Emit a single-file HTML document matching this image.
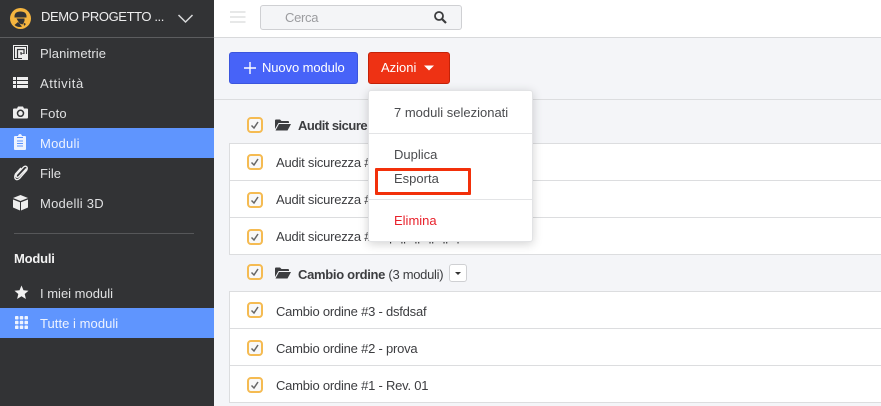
<!DOCTYPE html>
<html><head><meta charset="utf-8"><style>
*{box-sizing:border-box}
html,body{margin:0;padding:0}
body{width:881px;height:406px;position:relative;overflow:hidden;background:#f4f5f8;font-family:"Liberation Sans",sans-serif;font-size:13px;color:#3c3d40}
.a{position:absolute}
.t{position:absolute;white-space:nowrap;line-height:16px}
.nav{color:#e0e1e2}
.row{position:absolute;left:229px;width:660px;height:38px;background:#fff;border:1px solid #dcdddf}
.cb{position:absolute;left:247px;width:16px;height:16px;border:2px solid #f5bb52;border-radius:4px;background:#f8f8f8}
.cb svg{position:absolute;left:1px;top:1px}
</style></head><body>
<div class="a" style="left:214px;top:0;width:667px;height:38px;background:#fff;border-bottom:1px solid #d8d9db"></div>
<div class="a" style="left:214px;top:99px;width:667px;height:1px;background:#dcdddf"></div>
<div class="a" style="left:0;top:0;width:214px;height:406px;background:#323335"></div>
<div class="a" style="left:0;top:37px;width:214px;height:1px;background:#5c5d5f"></div>
<div class="a" style="left:0;top:128px;width:214px;height:30px;background:#5f95fe"></div>
<div class="a" style="left:0;top:308px;width:214px;height:30px;background:#5f95fe"></div>
<div class="a" style="left:14px;top:233px;width:180px;height:1px;background:#565759"></div>

<svg class="a" style="left:10px;top:8px" width="21" height="21" viewBox="0 0 21 21"><circle cx="10.500" cy="10.500" r="10.500" fill="#f5b53f"/><path d="M4.500 8.500Q4.500 3.500 10.500 3.500T16.500 8.500V9.500H4.500z" fill="#323335"/><path d="M6.500 10.500H14.500V13L12.500 16.500L9.500 15.500Z" fill="#323335"/><path d="M4.500 17L8 14 12 18.500Q8 20 4.500 17z" fill="#323335"/><path d="M13.500 14.500L14 18 16 16z" fill="#323335"/></svg>
<div class="t" style="left:41px;top:9px;color:#eeeeef;font-size:13px;letter-spacing:-.4px">DEMO PROGETTO ...</div>
<svg class="a" style="left:177px;top:13px" width="17" height="11" viewBox="0 0 17 11"><path d="M1.500 2l7 7 7-7" fill="none" stroke="#d8d9da" stroke-width="1.500"/></svg>

<svg class="a" style="left:13px;top:45px" width="15" height="15" viewBox="0 0 15 15"><rect width="15" height="15" fill="#eee"/><rect x="1" y="1" width="13" height="13" fill="#323335"/><rect x="2" y="2" width="11" height="11" fill="#eee"/><path d="M4.500 13V4.500H11V9H8V7" fill="none" stroke="#323335" stroke-width="1.200"/><rect x="9" y="9" width="5" height="5" fill="#eee"/></svg>
<div class="t nav" style="left:40px;top:46px;letter-spacing:.1px">Planimetrie</div>
<svg class="a" style="left:13px;top:76px" width="15" height="13" viewBox="0 0 15 13" fill="#eee"><rect y="1" width="3" height="3"/><rect x="4" y="1" width="11" height="3"/><rect y="5" width="3" height="3"/><rect x="4" y="5" width="11" height="3"/><rect y="9" width="3" height="3"/><rect x="4" y="9" width="11" height="3"/></svg>
<div class="t nav" style="left:40px;top:76px;letter-spacing:.6px">Attività</div>
<svg class="a" style="left:13px;top:106px" width="15" height="13" viewBox="0 0 15 13"><path d="M0 3.500Q0 2.500 1 2.500H4L5 .5H10L11 2.500H14Q15 2.500 15 3.500V11.500Q15 12.500 14 12.500H1Q0 12.500 0 11.500Z" fill="#eee"/><circle cx="7.500" cy="7.300" r="3" fill="none" stroke="#323335" stroke-width="1.500"/></svg>
<div class="t nav" style="left:40px;top:106px;letter-spacing:.2px">Foto</div>
<svg class="a" style="left:14px;top:134px" width="12" height="16" viewBox="0 0 12 16"><path d="M1 2H4Q4.500 0 6 0T8 2H11Q12 2 12 3V15Q12 16 11 16H1Q0 16 0 15V3Q0 2 1 2Z" fill="#eef3ff"/><path d="M3 3.500H9M3 7H9M3 9.500H9M3 12H9" stroke="#5f95fe" stroke-width="1"/></svg>
<div class="t nav" style="left:40px;top:136px;color:#eef3ff;letter-spacing:.25px">Moduli</div>
<svg class="a" style="left:14px;top:165px" width="14" height="16" viewBox="0 0 14 16"><path d="M12.500 3.500L5 11.500Q3.500 13 2.500 12T3 9L9.500 2Q11.500 .5 12.700 1.700T12.500 5.500L5.500 13.500Q3 15.500 1.500 14T1.500 9L7 3" fill="none" stroke="#eee" stroke-width="1.400"/></svg>
<div class="t nav" style="left:40px;top:166px">File</div>
<svg class="a" style="left:13px;top:195px" width="15" height="16" viewBox="0 0 15 16"><path d="M7.500 0L15 3 7.500 6 0 3z" fill="#eee"/><path d="M0 4.500L7 7.300V15.500L0 12.500z" fill="#eee"/><path d="M15 4.500L8 7.300V15.500L15 12.500z" fill="#eee"/></svg>
<div class="t nav" style="left:40px;top:196px;letter-spacing:.25px">Modelli 3D</div>

<div class="t" style="left:14px;top:251px;color:#f2f2f2;font-weight:bold;letter-spacing:-.2px">Moduli</div>
<svg class="a" style="left:14px;top:285px" width="15" height="15" viewBox="0 0 15 15"><path d="M7.500 .5L9.500 5.300 14.500 5.700 10.700 9 11.900 14 7.500 11.300 3.100 14 4.300 9 .5 5.700 5.500 5.300z" fill="#f2f2f2"/></svg>
<div class="t nav" style="left:40px;top:286px">I miei moduli</div>
<svg class="a" style="left:15px;top:316px" width="13" height="13" viewBox="0 0 13 13" fill="#eef3ff"><rect width="3.500" height="3.500" rx=".8"/><rect x="4.750" width="3.500" height="3.500" rx=".8"/><rect x="9.500" width="3.500" height="3.500" rx=".8"/><rect y="4.750" width="3.500" height="3.500" rx=".8"/><rect x="4.750" y="4.750" width="3.500" height="3.500" rx=".8"/><rect x="9.500" y="4.750" width="3.500" height="3.500" rx=".8"/><rect y="9.500" width="3.500" height="3.500" rx=".8"/><rect x="4.750" y="9.500" width="3.500" height="3.500" rx=".8"/><rect x="9.500" y="9.500" width="3.500" height="3.500" rx=".8"/></svg>
<div class="t nav" style="left:40px;top:316px;color:#eef3ff;letter-spacing:.05px">Tutte i moduli</div>

<svg class="a" style="left:230px;top:11px" width="16" height="12" viewBox="0 0 16 12"><path d="M0 1H15.500M0 6H15.500M0 11H15.500" stroke="#cfd0d2" stroke-width="1"/></svg>
<div class="a" style="left:260px;top:5px;width:202px;height:25px;background:#f4f5f7;border:1px solid #cfd0d3;border-radius:3px"></div>
<div class="t" style="left:285px;top:10px;color:#9b9c9f;letter-spacing:-.3px">Cerca</div>
<svg class="a" style="left:433px;top:10px" width="15" height="15" viewBox="0 0 15 15"><circle cx="6" cy="6" r="4" fill="none" stroke="#3b3c3e" stroke-width="1.800"/><path d="M9 9l4 4" stroke="#3b3c3e" stroke-width="2.200"/></svg>

<div class="a" style="left:229px;top:52px;width:129px;height:32px;background:#4763f8;border:1px solid #3b55dd;border-radius:3px"></div>
<svg class="a" style="left:244px;top:62px" width="12" height="12" viewBox="0 0 12 12"><path d="M6 0V12M0 6H12" stroke="#fff" stroke-width="1.400"/></svg>
<div class="t" style="left:262px;top:60px;color:#fff;letter-spacing:-.1px">Nuovo modulo</div>
<div class="a" style="left:368px;top:52px;width:82px;height:32px;background:#ee3214;border:1px solid #c42208;border-radius:3px"></div>
<div class="t" style="left:381px;top:60px;color:#fff">Azioni</div>
<svg class="a" style="left:424px;top:65px" width="10" height="6" viewBox="0 0 10 6"><path d="M0 .5H10L5 5.500z" fill="#fff"/></svg>

<!-- group 1 -->
<div class="cb" style="top:117px"><svg width="10" height="10" viewBox="0 0 10 10"><path d="M1.500 5.500L4 8 8 2" fill="none" stroke="#666" stroke-width="1.500"/></svg></div>
<svg class="a" style="left:275px;top:119px" width="16" height="12" viewBox="0 0 16 12"><path d="M0 1.500Q0 .5 1 .5H5L6.500 2H13Q14 2 14 3V4H3.500L0 10z" fill="#3c3d40"/><path d="M4 5H16L12.500 11.500H.5z" fill="#3c3d40"/></svg>
<div class="t" style="left:298px;top:118px;font-weight:bold;letter-spacing:-.5px">Audit sicure</div>

<div class="row" style="top:143px"></div>
<div class="row" style="top:180px"></div>
<div class="row" style="top:217px"></div>
<div class="cb" style="top:154px"><svg width="10" height="10" viewBox="0 0 10 10"><path d="M1.500 5.500L4 8 8 2" fill="none" stroke="#666" stroke-width="1.500"/></svg></div>
<div class="cb" style="top:192px"><svg width="10" height="10" viewBox="0 0 10 10"><path d="M1.500 5.500L4 8 8 2" fill="none" stroke="#666" stroke-width="1.500"/></svg></div>
<div class="cb" style="top:229px"><svg width="10" height="10" viewBox="0 0 10 10"><path d="M1.500 5.500L4 8 8 2" fill="none" stroke="#666" stroke-width="1.500"/></svg></div>
<div class="t" style="left:276px;top:155px;letter-spacing:-.22px">Audit sicurezza #3</div>
<div class="t" style="left:276px;top:192px;letter-spacing:-.22px">Audit sicurezza #2</div>
<div class="t" style="left:276px;top:229px;letter-spacing:-.22px">Audit sicurezza #1 - pqpqpqpqpq</div>

<!-- group 2 -->
<div class="cb" style="top:264px"><svg width="10" height="10" viewBox="0 0 10 10"><path d="M1.500 5.500L4 8 8 2" fill="none" stroke="#666" stroke-width="1.500"/></svg></div>
<svg class="a" style="left:275px;top:267px" width="16" height="12" viewBox="0 0 16 12"><path d="M0 1.500Q0 .5 1 .5H5L6.500 2H13Q14 2 14 3V4H3.500L0 10z" fill="#3c3d40"/><path d="M4 5H16L12.500 11.500H.5z" fill="#3c3d40"/></svg>
<div class="t" style="left:298px;top:267px;letter-spacing:-.3px"><b>Cambio ordine</b> (3 moduli)</div>
<div class="a" style="left:449px;top:264px;width:18px;height:18px;background:#fff;border:1px solid #cfd0d3;border-radius:3px"></div>
<svg class="a" style="left:455px;top:272px" width="6" height="3" viewBox="0 0 6 3"><path d="M0 0H6L3 3z" fill="#333"/></svg>

<div class="row" style="top:291px"></div>
<div class="row" style="top:328px"></div>
<div class="row" style="top:365px"></div>
<div class="cb" style="top:302px"><svg width="10" height="10" viewBox="0 0 10 10"><path d="M1.500 5.500L4 8 8 2" fill="none" stroke="#666" stroke-width="1.500"/></svg></div>
<div class="cb" style="top:340px"><svg width="10" height="10" viewBox="0 0 10 10"><path d="M1.500 5.500L4 8 8 2" fill="none" stroke="#666" stroke-width="1.500"/></svg></div>
<div class="cb" style="top:377px"><svg width="10" height="10" viewBox="0 0 10 10"><path d="M1.500 5.500L4 8 8 2" fill="none" stroke="#666" stroke-width="1.500"/></svg></div>
<div class="t" style="left:276px;top:304px;letter-spacing:-.22px">Cambio ordine #3 - dsfdsaf</div>
<div class="t" style="left:276px;top:341px;letter-spacing:-.22px">Cambio ordine #2 - prova</div>
<div class="t" style="left:276px;top:378px;letter-spacing:-.22px">Cambio ordine #1 - Rev. 01</div>

<!-- dropdown -->
<div class="a" style="left:368px;top:90px;width:165px;height:152px;background:#fff;border-radius:3px;border:1px solid #e2e3e5;box-shadow:0 2px 10px rgba(0,0,0,.18)"></div>
<div class="a" style="left:369px;top:133px;width:163px;height:1px;background:#e3e4e6"></div>
<div class="a" style="left:369px;top:199px;width:163px;height:1px;background:#e3e4e6"></div>
<div class="t" style="left:394px;top:105px;color:#4a4b4e">7 moduli selezionati</div>
<div class="t" style="left:394px;top:147px;color:#4a4b4e">Duplica</div>
<div class="t" style="left:394px;top:171px;color:#4a4b4e">Esporta</div>
<div class="t" style="left:394px;top:213px;color:#e8222c">Elimina</div>
<div class="a" style="left:375px;top:168px;width:96px;height:27px;border:3px solid #f2300a;border-radius:1px"></div>
</body></html>
